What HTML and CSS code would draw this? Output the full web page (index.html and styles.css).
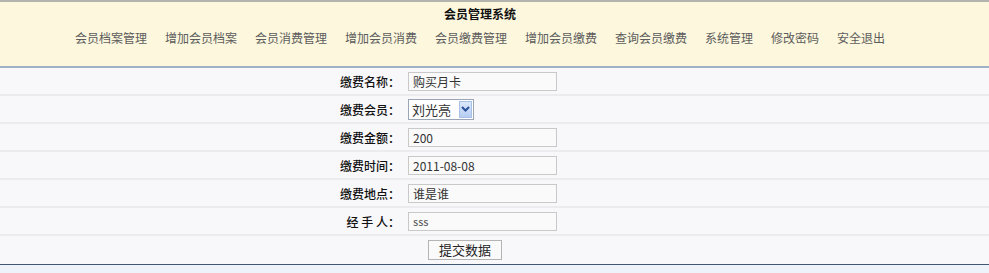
FILE: index.html
```html
<!DOCTYPE html>
<html lang="zh-CN">
  <head>
    <meta charset="UTF-8" />
    <title>会员管理系统</title>
    <link rel="stylesheet" href="styles.css">
  </head>
  <body>
    <div class="header">
      <div class="title">会员管理系统</div>
      <div class="nav">
        <a href="#">会员档案管理</a>
        <a href="#">增加会员档案</a>
        <a href="#">会员消费管理</a>
        <a href="#">增加会员消费</a>
        <a href="#">会员缴费管理</a>
        <a href="#">增加会员缴费</a>
        <a href="#">查询会员缴费</a>
        <a href="#">系统管理</a>
        <a href="#">修改密码</a>
        <a href="#">安全退出</a>
      </div>
    </div>
    <form class="pay-form" action="#" method="post">
      <div class="row">
        <label class="label" for="name">缴费名称：</label>
        <div class="field"><input type="text" id="name" class="text-input" value="购买月卡" /></div>
      </div>
      <div class="row">
        <label class="label" for="member">缴费会员：</label>
        <div class="field">
          <span class="select-box">
            <select id="member" class="select">
              <option>刘光亮</option>
            </select>
            <span class="select-arrow">
              <svg width="9" height="6" viewBox="0 0 9 6"><path d="M1 1 L4.5 4.5 L8 1" fill="none" stroke="#2a4f9a" stroke-width="2"/></svg>
            </span>
          </span>
        </div>
      </div>
      <div class="row">
        <label class="label" for="money">缴费金额：</label>
        <div class="field"><input type="text" id="money" class="text-input" value="200" /></div>
      </div>
      <div class="row">
        <label class="label" for="time">缴费时间：</label>
        <div class="field"><input type="text" id="time" class="text-input" value="2011-08-08" /></div>
      </div>
      <div class="row">
        <label class="label" for="place">缴费地点：</label>
        <div class="field"><input type="text" id="place" class="text-input" value="谁是谁" /></div>
      </div>
      <div class="row">
        <label class="label" for="handler">经 手 人：</label>
        <div class="field"><input type="text" id="handler" class="text-input small" value="sss" /></div>
      </div>
      <div class="row">
        <div class="label"></div>
        <div class="field"><button type="submit" class="submit">提交数据</button></div>
      </div>
    </form>
    <div class="footer"></div>
  </body>
</html>
```

FILE: styles.css
```css
body {
  margin: 0;
  font-family: "Noto Sans CJK SC", "Liberation Sans", sans-serif;
  font-size: 12px;
  background-color: #eef3f9;
}
.header {
  background-color: #fcf7dd;
  border-top: 2px solid #b3b3b0;
  border-bottom: 2px solid #9fb1c2;
  height: 64px;
  padding-right: 29px;
  box-sizing: content-box;
}
.title {
  padding-top: 4px;
  line-height: 16px;
  text-align: center;
  font-weight: bold;
  color: #111;
}
.nav {
  margin-top: 8px;
  line-height: 16px;
  display: flex;
  justify-content: center;
  gap: 18px;
}
.nav a {
  color: #5c5c5c;
  text-decoration: none;
}
.pay-form {
  margin: 0;
  background-color: #f8f7fa;
}
.row {
  display: grid;
  grid-template-columns: 400px 1fr;
  height: 26px;
  border-bottom: 2px solid #ececee;
  align-items: center;
}
.row:last-child {
  border-bottom: none;
  height: 28px;
}
.label {
  text-align: right;
  padding-right: 0;
  color: #111;
  font-weight: 500;
  white-space: pre;
}
.field {
  padding-left: 8px;
  display: flex;
  align-items: center;
}
.text-input {
  width: 149px;
  height: 19px;
  box-sizing: border-box;
  border: 1px solid #c9c9c9;
  background-color: #fafafa;
  padding: 0 4px;
  font-family: "Noto Sans CJK SC", "Liberation Sans", sans-serif;
  font-size: 12px;
  color: #333;
}
.text-input.small {
  font-size: 11px;
  color: #555;
}
.select-box {
  display: inline-flex;
  align-items: center;
  height: 21px;
  width: 66px;
  box-sizing: border-box;
  border: 1px solid #9aa6b8;
  background-color: #fff;
}
.select {
  appearance: none;
  border: none;
  background: transparent;
  width: 50px;
  padding: 0 0 0 3px;
  font-family: "Noto Sans CJK SC", "Liberation Sans", sans-serif;
  font-size: 13px;
  color: #333;
  outline: none;
}
.select-arrow {
  width: 13px;
  height: 17px;
  display: flex;
  align-items: center;
  justify-content: center;
  background: linear-gradient(#dce8fb, #b6cdf2);
  border: 1px solid #a9c0e6;
  box-sizing: border-box;
}
.submit {
  margin-left: 20px;
  width: 74px;
  height: 20px;
  padding: 0;
  border: 1px solid #b4b4b4;
  background-color: #fafafa;
  font-family: "Noto Sans CJK SC", "Liberation Sans", sans-serif;
  font-size: 13px;
  line-height: 18px;
  color: #222;
}
.footer {
  border-top: 1px solid #3e5874;
  height: 10px;
}
```
